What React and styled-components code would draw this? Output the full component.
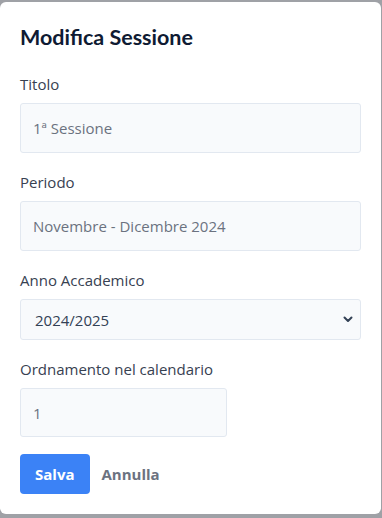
import React from 'react'
import styled, { createGlobalStyle } from 'styled-components'

const GlobalStyle = createGlobalStyle`
  html, body {
    margin: 0;
    padding: 0;
    background: #9fa1a6;
    font-family: "Open Sans", Lato, sans-serif;
  }
`;

const Card = styled.div`
  box-sizing: border-box;
  margin: 2px 1px 0 0;
  height: 512px;
  background: #ffffff;
  border-radius: 6px;
  padding: 21px 20px 20px;
`;

const Heading = styled.h2`
  margin: 0 0 22px;
  font-family: Lato, sans-serif;
  font-size: 21.5px;
  line-height: 28px;
  font-weight: 700;
  color: #0f1b33;
`;

const Field = styled.div`
  display: flex;
  flex-direction: column;
  gap: 8px;
  margin-bottom: 18px;
`;

const Label = styled.label`
  font-size: 15px;
  line-height: 22px;
  color: #374151;
`;

const Input = styled.input`
  box-sizing: border-box;
  width: ${p => p.$width || '100%'};
  height: ${p => p.$height || '50px'};
  padding: 0 12px;
  background: #f8fafc;
  border: 1px solid #e2e8f0;
  border-radius: 3px;
  font-family: inherit;
  font-size: 15px;
  color: #6b7280;
  outline: none;
`;

const SelectWrap = styled.div`
  position: relative;
`;

const Select = styled.select`
  box-sizing: border-box;
  width: 100%;
  height: 41px;
  padding: 0 14px;
  appearance: none;
  background: #f8fafc;
  border: 1px solid #e2e8f0;
  border-radius: 3px;
  font-family: inherit;
  font-size: 15px;
  color: #334155;
  outline: none;
`;

const Chevron = styled.svg`
  position: absolute;
  right: 8px;
  top: 15px;
  pointer-events: none;
`;

const Actions = styled.div`
  display: flex;
  align-items: center;
  gap: 12px;
  margin-top: -1px;
`;

const Button = styled.button`
  height: 40px;
  padding: 0 ${p => (p.$primary ? '15px' : '0')};
  border: none;
  border-radius: 4px;
  background: ${p => (p.$primary ? '#3b82f6' : 'transparent')};
  color: ${p => (p.$primary ? '#ffffff' : '#6b7280')};
  font-family: inherit;
  font-size: 15px;
  font-weight: 700;
`;

export default function App() {
  return (
    <>
      <GlobalStyle />
      <Card>
        <Heading>Modifica Sessione</Heading>
        <Field>
          <Label>Titolo</Label>
          <Input defaultValue="1ª Sessione" />
        </Field>
        <Field>
          <Label>Periodo</Label>
          <Input defaultValue="Novembre - Dicembre 2024" />
        </Field>
        <Field>
          <Label>Anno Accademico</Label>
          <SelectWrap>
            <Select defaultValue="2024/2025">
              <option>2024/2025</option>
            </Select>
            <Chevron width="10" height="10" viewBox="0 0 10 10">
              <path d="M1.5 3.5 L5 7 L8.5 3.5" fill="none" stroke="#334155" strokeWidth="2" strokeLinecap="round" strokeLinejoin="round" />
            </Chevron>
          </SelectWrap>
        </Field>
        <Field>
          <Label>Ordnamento nel calendario</Label>
          <Input $width="207px" $height="49px" defaultValue="1" />
        </Field>
        <Actions>
          <Button $primary>Salva</Button>
          <Button>Annulla</Button>
        </Actions>
      </Card>
    </>
  )
}
